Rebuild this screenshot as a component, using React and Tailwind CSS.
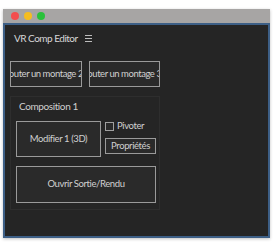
export default function App() {
  return (
    <div className="w-[276px] h-[246px] bg-white pt-[9px] pl-[3px]" style={{ fontFamily: 'Lato, "Noto Sans", sans-serif' }}>
      <div className="w-[267px] h-[229px] flex flex-col shadow-[0_1px_3px_rgba(0,0,0,0.25)]">
        <div className="h-[14px] bg-[#a7a5a4] flex items-center gap-[5px] pl-[8px]">
          <span className="w-[8px] h-[8px] rounded-full bg-[#f24e4e]" />
          <span className="w-[8px] h-[8px] rounded-full bg-[#f5bd1f]" />
          <span className="w-[8px] h-[8px] rounded-full bg-[#29c13a]" />
        </div>
        <div className="flex-1 bg-[#252525] border-2 border-[#3d5f86] flex flex-col">
          <div className="flex items-center h-[26px] pl-[9px] text-[10px] tracking-[-0.5px] text-[#d8d8d8] gap-[7px]">
            <span>VR Comp Editor</span>
            <span className="flex flex-col gap-[2px] w-[7px]">
              <span className="h-px bg-[#bdbdbd]" />
              <span className="h-px bg-[#bdbdbd]" />
              <span className="h-px bg-[#bdbdbd]" />
            </span>
          </div>
          <div className="flex gap-[7px] pl-[5px] mt-[10px] tracking-[-0.45px]">
            <div className="w-[72px] h-[26px] border border-[#9a9a9a] bg-[#2a2a2a] flex items-center justify-center overflow-hidden pr-[8px]">
              <span className="whitespace-nowrap text-[9.5px] text-[#d0d0d0]">Ajouter un montage 2</span>
            </div>
            <div className="w-[71px] h-[26px] border border-[#9a9a9a] bg-[#2a2a2a] flex items-center justify-center overflow-hidden pr-[8px]">
              <span className="whitespace-nowrap text-[9.5px] text-[#d0d0d0]">Ajouter un montage 3</span>
            </div>
          </div>
          <div className="ml-[5px] mt-[9px] w-[150px] h-[114px] border border-[#2e2e2e] flex flex-col pl-[5px] tracking-[-0.4px]">
            <div className="text-[10px] text-[#cfcfcf] pl-[3px] mt-[1px] h-[16px] flex items-center">Composition 1</div>
            <div className="flex gap-[4px] mt-[7px]">
              <div className="w-[85px] h-[36px] border border-[#9a9a9a] bg-[#2a2a2a] flex items-center justify-center text-[9.5px] text-[#d0d0d0]">
                Modifier 1 (3D)
              </div>
              <div className="flex flex-col">
                <div className="flex items-center gap-[3px] h-[10px]">
                  <span className="w-[9px] h-[9px] border border-[#a0a0a0] bg-[#2a2a2a]" />
                  <span className="text-[9.5px] text-[#d0d0d0]">Pivoter</span>
                </div>
                <div className="mt-[7px] w-[51px] h-[16px] border border-[#9a9a9a] bg-[#2a2a2a] flex items-center justify-center text-[9.5px] text-[#d0d0d0]">
                  Propriétés
                </div>
              </div>
            </div>
            <div className="mt-[9px] w-[140px] h-[37px] border border-[#9a9a9a] bg-[#2a2a2a] flex items-center justify-center text-[9.5px] text-[#d0d0d0]">
              Ouvrir Sortie/Rendu
            </div>
          </div>
        </div>
      </div>
    </div>
  );
}
